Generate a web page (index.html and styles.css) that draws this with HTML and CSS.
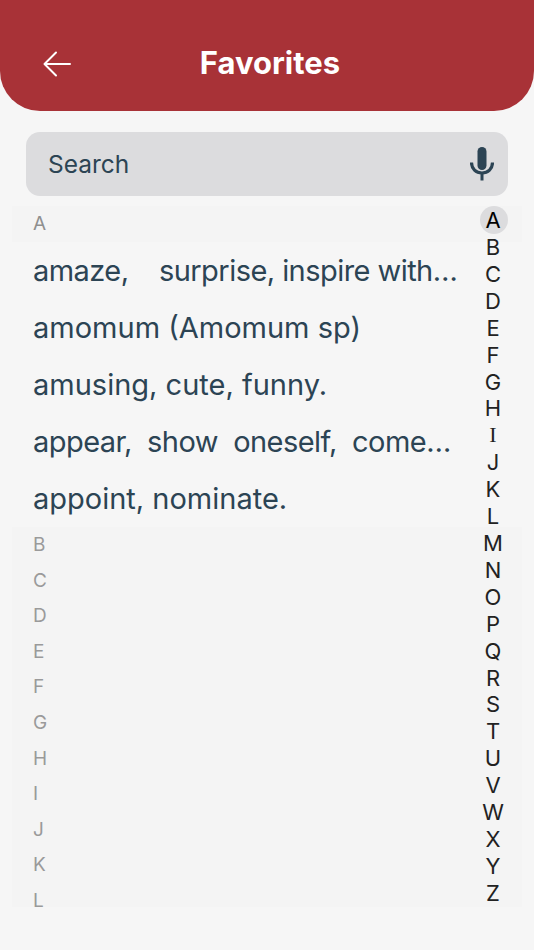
FILE: index.html
```html
<!DOCTYPE html>
<html lang="en">
<head>
<meta charset="utf-8">
<title>Favorites</title>
<link rel="stylesheet" href="styles.css">
</head>
<body>
<div class="app">
  <header class="header">
    <svg class="back" viewBox="0 0 28 26" width="28" height="26" aria-hidden="true"><path d="M27 13H2M13 1.500 1.500 13 13 24.500" fill="none" stroke="#fff" stroke-width="2" stroke-linecap="round" stroke-linejoin="round"/></svg>
    <h1 class="title">Favorites</h1>
  </header>
  <div class="search">
    <span class="search-text">Search</span>
    <svg class="mic" viewBox="0 0 24 34" width="24" height="34" aria-hidden="true"><rect x="7.500" y="0" width="9" height="23" rx="4.500" fill="#2c4454"/><path d="M1.500 15.500C1.500 22 6 26 12 26s10.500-4 10.500-10.500" fill="none" stroke="#2c4454" stroke-width="3.200"/><rect x="10.500" y="25" width="3" height="8.500" fill="#2c4454"/></svg>
  </div>
  <main class="list">
    <div class="section">A</div>
    <div class="row tight">amaze,    surprise, inspire with…</div>
    <div class="row">amomum (Amomum sp)</div>
    <div class="row">amusing, cute, funny.</div>
    <div class="row tight">appear,  show  oneself,  come…</div>
    <div class="row">appoint, nominate.</div>
    <div class="empty">
      <div class="letter">B</div><div class="letter">C</div><div class="letter">D</div><div class="letter">E</div><div class="letter">F</div><div class="letter">G</div><div class="letter">H</div><div class="letter">I</div><div class="letter">J</div><div class="letter">K</div><div class="letter">L</div>
    </div>
  </main>
  <nav class="index">
    <span class="idx active">A</span><span class="idx">B</span><span class="idx">C</span><span class="idx">D</span><span class="idx">E</span><span class="idx">F</span><span class="idx">G</span><span class="idx">H</span><span class="idx serif">I</span><span class="idx">J</span><span class="idx">K</span><span class="idx">L</span><span class="idx">M</span><span class="idx">N</span><span class="idx">O</span><span class="idx">P</span><span class="idx">Q</span><span class="idx">R</span><span class="idx">S</span><span class="idx">T</span><span class="idx">U</span><span class="idx">V</span><span class="idx">W</span><span class="idx">X</span><span class="idx">Y</span><span class="idx">Z</span>
  </nav>
</div>
</body>
</html>
```
FILE: styles.css
```css
* { box-sizing: border-box; }
html, body { margin: 0; padding: 0; }
body { background: #f6f6f6; font-family: "Inter", "Noto Sans", sans-serif; }
.app { position: relative; width: 534px; height: 950px; overflow: hidden; }
.header {
  height: 111px; background: #a83237; border-radius: 0 0 40px 40px;
  display: flex; align-items: center; justify-content: center;
  padding-top: 15px; position: relative;
}
.back { position: absolute; left: 43px; top: 51px; }
.title { margin: 0; color: #fff; font-size: 31px; font-weight: 700; line-height: 36px; position: relative; left: 3px; }
.search {
  margin: 21px 26px 0 26px; height: 64px; background: #dcdcde; border-radius: 14px;
  display: flex; align-items: center; justify-content: space-between;
  padding: 0 14px 0 22px;
}
.search-text { color: #2c4454; font-size: 24.500px; }
.mic { display: block; }
.list { margin: 10px 12px 0 12px; }
.section { height: 36px; background: #f4f4f4; color: #8f8f8f; font-size: 19px; line-height: 36px; padding-left: 21px; }
.row { height: 57px; line-height: 58px; padding-left: 21px; color: #2c4454; font-size: 29px; white-space: pre; }
.tight { letter-spacing: -0.550px; }
.empty { background: #f4f4f4; height: 380px; }
.letter { height: 35.600px; line-height: 35.600px; padding-left: 21px; color: #9a9a9a; font-size: 19px; }
.index { position: absolute; left: 480px; top: 206px; width: 28px; display: flex; flex-direction: column; align-items: center; }
.idx { height: 26.920px; line-height: 28px; font-size: 22px; color: #222; margin-right: 2px; }
.active { width: 28px; height: 28px; line-height: 28px; text-align: center; border-radius: 50%; background: #dcdcde; color: #000; margin: 0 0 -1px; padding-right: 2px; }
.serif { font-family: "Liberation Serif", serif; }
```
